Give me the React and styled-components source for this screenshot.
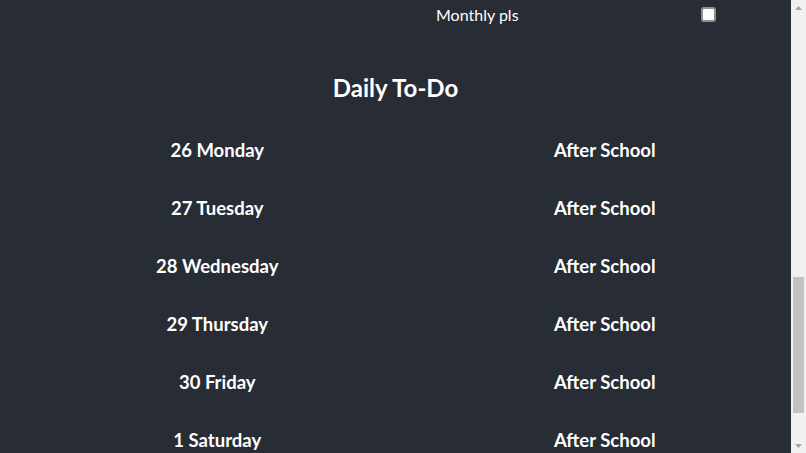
import React from "react";
import styled, { createGlobalStyle } from "styled-components";

const GlobalStyle = createGlobalStyle`
  html, body {
    margin: 0;
    background: #282c34;
    overflow: hidden;
  }
  body {
    font-family: "Lato", "Noto Sans", sans-serif;
    color: #ffffff;
  }
`;

const Screen = styled.div`
  display: flex;
  height: 100vh;
`;

const Main = styled.div`
  flex: 1;
  overflow: hidden;
  padding: 0 8px;
`;

const MonthlyRow = styled.div`
  display: grid;
  grid-template-columns: 428px 1fr 149px;
  align-items: center;
  height: 29px;
  font-size: 16px;
`;

const TaskLabel = styled.span`
  grid-column: 2;
`;

const CheckCell = styled.div`
  display: flex;
  justify-content: center;
  padding-bottom: 1px;
`;

const Check = styled.input`
  appearance: none;
  box-sizing: border-box;
  width: 15px;
  height: 15px;
  margin: 0;
  border: 2px solid #8f8f8f;
  border-radius: 3px;
  background: #ffffff;
`;

const Title = styled.h2`
  margin: 43px 0 17px;
  font-size: 24px;
  line-height: 32px;
  font-weight: 700;
  text-align: center;
`;

const DayTable = styled.div`
  display: grid;
  grid-template-columns: 54fr 46fr;
  grid-auto-rows: 58px;
`;

const Cell = styled.div`
  display: flex;
  align-items: center;
  justify-content: center;
  font-size: 18.5px;
  font-weight: 700;
`;

const Scrollbar = styled.div`
  width: 15px;
  flex: none;
  display: flex;
  flex-direction: column;
  background: #f1f1f1;
`;

const Arrow = styled.div`
  height: 15px;
  display: flex;
  align-items: center;
  justify-content: center;
`;

const Track = styled.div`
  flex: 1;
  display: flex;
  flex-direction: column;
  padding: 0 2px;
`;

const Thumb = styled.div`
  background: #c1c1c1;
  flex: none;
`;

const days = [
  "26 Monday",
  "27 Tuesday",
  "28 Wednesday",
  "29 Thursday",
  "30 Friday",
  "1 Saturday",
  "2 Sunday",
];

const ArrowIcon = ({ down }) => (
  <svg width="7" height="4" viewBox="0 0 7 4">
    <path d={down ? "M0 0 L7 0 L3.5 4 Z" : "M0 4 L7 4 L3.5 0 Z"} fill="#a3a3a3" />
  </svg>
);

const App = () => {
  return (
    <Screen>
      <GlobalStyle />
      <Main>
        <MonthlyRow>
          <TaskLabel>Monthly pls</TaskLabel>
          <CheckCell>
            <Check type="checkbox" />
          </CheckCell>
        </MonthlyRow>
        <Title>Daily To-Do</Title>
        <DayTable>
          {days.map((day) => (
            <React.Fragment key={day}>
              <Cell>{day}</Cell>
              <Cell>After School</Cell>
            </React.Fragment>
          ))}
        </DayTable>
      </Main>
      <Scrollbar>
        <Arrow>
          <ArrowIcon />
        </Arrow>
        <Track>
          <div style={{ height: 262 }} />
          <Thumb style={{ height: 136 }} />
        </Track>
        <Arrow>
          <ArrowIcon down />
        </Arrow>
      </Scrollbar>
    </Screen>
  );
};

export default App;
